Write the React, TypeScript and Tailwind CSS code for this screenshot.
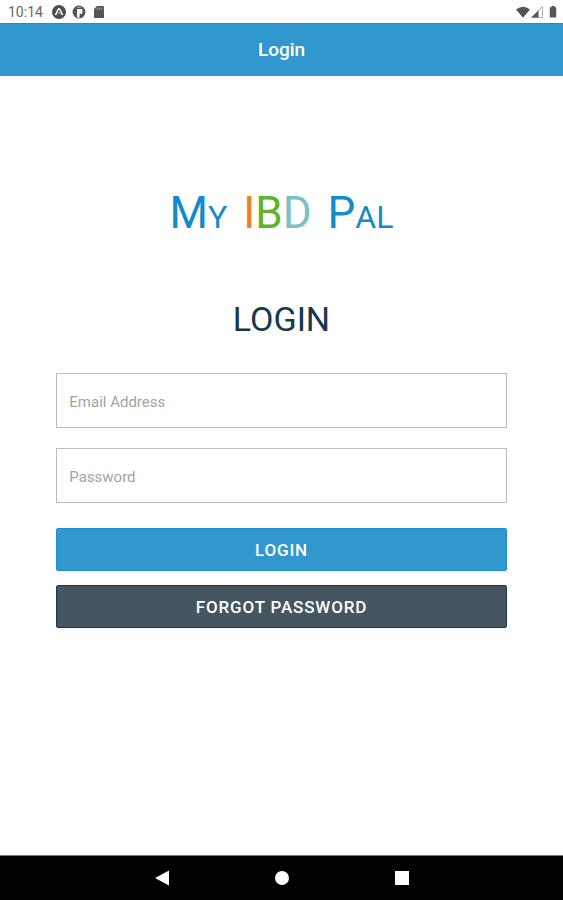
import type { ReactNode } from "react";

function StatusBar() {
  return (
    <div className="flex h-[23px] items-center justify-between px-2 pr-1 text-[#666]">
      <div className="flex items-center gap-1.5">
        <span className="w-[38px] text-sm leading-5">10:14</span>
        <svg className="size-3.5" viewBox="0 0 14 14" aria-hidden="true">
          <circle cx="7" cy="7" r="7" fill="#4d4d4d" />
          <path d="M3.4 10 6.2 4.3Q7 3 7.8 4.3L10.6 10" fill="none" stroke="#fff" strokeWidth="1.5" />
          <path d="M5.3 9.6 7 7l1.7 2.6" fill="none" stroke="#aaa" strokeWidth="1" />
        </svg>
        <svg className="size-3.5" viewBox="0 0 14 14" aria-hidden="true">
          <circle cx="7" cy="7" r="5.8" fill="#f4f4f4" stroke="#555" strokeWidth="1.3" />
          <path d="M5.2 1.2A6.3 6.3 0 0 0 5.2 12.8V4h5v4.6H7.4v4.6Q13 12.6 13 7A6 6 0 0 0 11 2.5H5.2Z" fill="#555" />
          <path d="M5.2 4h5v4.4H7.4v4.4L5.2 12.4Z" fill="#f4f4f4" />
        </svg>
        <svg className="size-3.5" viewBox="0 0 14 14" aria-hidden="true">
          <path d="M5 1h6.2q.8 0 .8.8v10.4q0 .8-.8.8H2.8q-.8 0-.8-.8V4Z" fill="#555" />
          <path d="M5.4 2.6v2M7.6 2.6v2M9.8 2.6v2" stroke="#aaa" strokeWidth="1" />
        </svg>
      </div>
      <div className="flex items-center">
        <svg className="h-3 w-4" viewBox="0 0 16 12" aria-hidden="true">
          <path d="M1 3.4Q8-2 15 3.4L8 11.8Z" fill="#555" />
        </svg>
        <svg className="h-3 w-3" viewBox="0 0 12 12" aria-hidden="true">
          <path d="M.5 11.5h11V.5Z" fill="#fff" stroke="#999" strokeWidth=".8" />
          <path d="M.5 11.5h7v-7Z" fill="#555" />
        </svg>
        <svg className="ml-1 h-3 w-3" viewBox="0 0 12 12" aria-hidden="true">
          <path d="M4.5 0h3v1.2h1.7v10.3H2.8V1.2h1.7Z" fill="#555" />
        </svg>
      </div>
    </div>
  );
}

function Logo() {
  return (
    <div className="flex h-[60px] items-baseline justify-center gap-4 text-[44px] leading-[60px] text-[#128bc8]">
      <span>M<span className="text-[32px]">Y</span></span>
      <span>
        <span className="text-[#f27c20]">I</span>
        <span className="text-[#60b32b]">B</span>
        <span className="text-[#7dc1c5]">D</span>
      </span>
      <span>P<span className="text-[32px]">AL</span></span>
    </div>
  );
}

function Field({ label, type }: { label: string; type: string }) {
  return (
    <input
      type={type}
      aria-label={label}
      placeholder={label}
      className="h-[55px] w-full border border-[#bcbcbc] bg-white px-3 pt-0.5 text-[15px] text-[#12344a] outline-none placeholder:text-[#a3a3a3]"
    />
  );
}

function NavButton({ label, children }: { label: string; children: ReactNode }) {
  return (
    <button type="button" aria-label={label} className="flex w-[120px] justify-center">
      <svg className="size-4" viewBox="0 0 16 16" fill="#fff" aria-hidden="true">
        {children}
      </svg>
    </button>
  );
}

export default function App() {
  return (
    <div className="flex min-h-screen flex-col bg-white font-['Roboto',sans-serif]">
      <StatusBar />
      <header className="flex h-[53px] items-center justify-center border-t border-[#1d8fcd] bg-[#3198cd] text-[19px] font-medium text-white">
        Login
      </header>

      <main className="mx-auto flex w-4/5 flex-1 flex-col pt-[107px]">
        <Logo />
        <h1 className="mt-14 text-center text-[34px] leading-10 text-[#17384d]">LOGIN</h1>
        <form className="mt-[34px]" onSubmit={(e) => e.preventDefault()}>
          <div className="flex flex-col gap-5">
            <Field label="Email Address" type="email" />
            <Field label="Password" type="password" />
          </div>
          <div className="mt-[25px] flex flex-col gap-3.5 text-[17px] font-medium tracking-wider text-white">
            <button type="submit" className="h-[43px] rounded-xs border border-[#1c8fcb] bg-[#3198cd] pt-0.5">
              LOGIN
            </button>
            <button type="button" className="h-[43px] rounded-xs border border-[#17384d] bg-[#455661] pt-0.5">
              FORGOT PASSWORD
            </button>
          </div>
        </form>
      </main>

      <nav className="flex h-[45px] items-center justify-center border-t border-[#777] bg-black">
        <NavButton label="Back">
          <path d="M1 8 15 .5v15Z" />
        </NavButton>
        <NavButton label="Home">
          <circle cx="8" cy="8" r="7" />
        </NavButton>
        <NavButton label="Recent apps">
          <path d="M1 1h14v14H1Z" />
        </NavButton>
      </nav>
    </div>
  );
}
